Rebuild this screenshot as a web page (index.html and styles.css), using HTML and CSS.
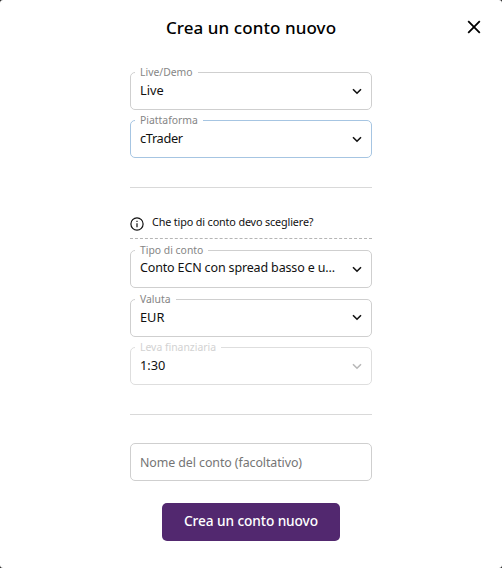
FILE: index.html
```html
<!DOCTYPE html>
<html lang="it">
<head>
<meta charset="utf-8">
<title>Crea un conto nuovo</title>
<link rel="stylesheet" href="styles.css">
</head>
<body>
<main class="dialog">
  <header class="header">
    <h1 class="title">Crea un conto nuovo</h1>
    <svg class="close" width="14" height="14" viewBox="0 0 14 14"><path d="M1.2 1.2l11.6 11.6M12.8 1.2l-11.6 11.6"/></svg>
  </header>
  <form class="form">
    <div class="group group-top">
      <div class="field"><span class="label">Live/Demo</span><span class="value">Live</span><svg class="chevron" width="10" height="7" viewBox="0 0 10 7"><path d="M1 1.2l4 4 4-4"/></svg></div>
      <div class="field active"><span class="label">Piattaforma</span><span class="value trader">cTrader</span><svg class="chevron" width="10" height="7" viewBox="0 0 10 7"><path d="M1 1.2l4 4 4-4"/></svg></div>
    </div>
    <div class="rule"></div>
    <div class="hint">
      <svg class="info" width="14" height="14" viewBox="0 0 14 14"><circle cx="7" cy="7" r="6.1"/><path d="M7 6.2v4M7 3.8v1.2"/></svg>
      <span class="hint-text">Che tipo di conto devo scegliere?</span>
    </div>
    <div class="group">
      <div class="field"><span class="label">Tipo di conto</span><span class="value long">Conto ECN con spread basso e u...</span><svg class="chevron" width="10" height="7" viewBox="0 0 10 7"><path d="M1 1.2l4 4 4-4"/></svg></div>
      <div class="field"><span class="label">Valuta</span><span class="value">EUR</span><svg class="chevron" width="10" height="7" viewBox="0 0 10 7"><path d="M1 1.2l4 4 4-4"/></svg></div>
      <div class="field disabled"><span class="label">Leva finanziaria</span><span class="value">1:30</span><svg class="chevron" width="10" height="7" viewBox="0 0 10 7"><path d="M1 1.2l4 4 4-4"/></svg></div>
    </div>
    <div class="rule"></div>
    <div class="field"><span class="value placeholder">Nome del conto (facoltativo)</span></div>
    <button class="submit" type="button">Crea un conto nuovo</button>
  </form>
</main>
</body>
</html>
```

FILE: styles.css
```css
* { box-sizing: border-box; }
body {
  margin: 0;
  background: #222;
  font-family: "Noto Sans", "Open Sans", sans-serif;
  color: #111;
}
.dialog {
  height: 568px;
  background: #fff;
  border-radius: 3px;
  overflow: hidden;
}
.header {
  position: relative;
  height: 72px;
  padding-top: 16px;
}
.title {
  margin: 0;
  color: #000;
  text-align: center;
  font-size: 17px;
  line-height: 24px;
  font-weight: 500;
  letter-spacing: 0.08px;
  white-space: nowrap;
}
.close {
  position: absolute;
  top: 20px;
  right: 21px;
  fill: none;
  stroke: #000;
  stroke-width: 1.8;
}
.form {
  display: flex;
  flex-direction: column;
  width: 242px;
  margin-left: 130px;
}
.group {
  display: grid;
  gap: 10.5px;
}
.group-top { gap: 10px; }
.field {
  position: relative;
  display: flex;
  align-items: center;
  justify-content: space-between;
  height: 38px;
  padding: 0 9px;
  border: 1px solid #cfcfcf;
  border-radius: 5px;
}
.active { border-color: #a6c5e2; }
.label {
  position: absolute;
  top: -8px;
  left: 4px;
  padding: 0 5px;
  background: #fff;
  color: #858585;
  font-size: 10.4px;
  line-height: 14px;
  white-space: nowrap;
}
.value {
  padding-bottom: 2px;
  font-size: 12.8px;
  line-height: 18px;
  white-space: nowrap;
}
.trader { letter-spacing: -0.35px; }
.long {
  font-size: 12.5px;
  letter-spacing: -0.15px;
}
.chevron {
  flex: none;
  fill: none;
  stroke: #111;
  stroke-width: 1.6;
}
.disabled { border-color: #dedede; }
.disabled .label { color: #d2d2d2; }
.disabled .chevron { stroke: #b8b8b8; }
.rule {
  height: 1px;
  margin: 29px 0 28px;
  background: #d9d9d9;
}
.hint {
  display: flex;
  align-items: flex-start;
  gap: 8px;
  height: 23px;
  margin-bottom: 11px;
  border-bottom: 1px dashed #b5b5b5;
}
.info {
  margin-top: 1px;
  fill: none;
  stroke: #111;
  stroke-width: 1.2;
}
.hint-text {
  margin-top: -2px;
  font-size: 10.8px;
  line-height: 16px;
  letter-spacing: -0.14px;
  white-space: nowrap;
}
.placeholder {
  padding: 1px 0 0;
  color: #757575;
  font-size: 12.4px;
  letter-spacing: -0.08px;
}
.submit {
  align-self: center;
  width: 178px;
  height: 38px;
  margin-top: 22px;
  padding: 0 0 2px;
  border: 0;
  border-radius: 5px;
  background: #52286f;
  color: #fff;
  font: 500 13.7px/36px "Noto Sans", "Open Sans", sans-serif;
  letter-spacing: -0.1px;
  white-space: nowrap;
}
```
